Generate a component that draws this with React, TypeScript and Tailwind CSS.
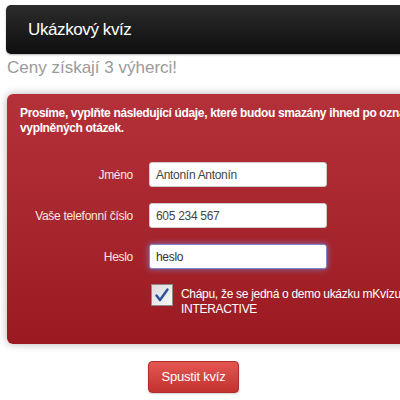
import React from 'react';

const rows = [
  { label: 'Jméno', value: 'Antonín Antonín', focus: false },
  { label: 'Vaše telefonní číslo', value: '605 234 567', focus: false },
  { label: 'Heslo', value: 'heslo', focus: true },
];

const App: React.FC = () => {
  return (
    <div className="w-[400px] h-[400px] overflow-hidden bg-white pl-[6px] pt-[5px] font-['Liberation_Sans',Arial,sans-serif]">
      <div className="w-[420px] h-[49px] rounded-l-[5px] bg-gradient-to-b from-[#2c2c2c] to-[#0f0f0f] flex items-center pl-[22px] shadow-[0_1px_2px_rgba(0,0,0,0.3)]">
        <h1 className="text-white text-[17px] tracking-[-0.4px] leading-none">Ukázkový kvíz</h1>
      </div>
      <p className="text-[#9a9a9a] text-[17px] leading-[20px] mt-[4px] pl-[1px]">Ceny získají 3 výherci!</p>

      <div className="ml-[1px] mt-[16px] w-[480px] h-[250px] rounded-[6px] bg-gradient-to-b from-[#b5313a] to-[#9b1a21] shadow-[0_0_8px_rgba(0,0,0,0.3)] pt-[12px] pl-[13px]">
        <p className="text-white text-[12px] tracking-[-0.35px] font-bold leading-[15px] w-[420px]">
          Prosíme, vyplňte následující údaje, které budou smazány ihned po označení vyplněných otázek.
        </p>

        <div className="mt-[26px] flex flex-col gap-[16px]">
          {rows.map((r) => (
            <div key={r.label} className="flex items-center">
              <label className="w-[113px] text-right text-[12px] tracking-[-0.3px] text-[#f6e6e6]">{r.label}</label>
              <div
                className={
                  r.focus
                    ? 'ml-[16px] w-[178px] h-[25px] rounded-[3px] bg-white border border-[#7d88c6] shadow-[0_0_6px_rgba(120,140,230,0.8)] flex items-center pl-[6px] text-[12px] tracking-[-0.3px] text-[#333]'
                    : 'ml-[16px] w-[178px] h-[25px] rounded-[3px] bg-white border border-[#ccc] flex items-center pl-[6px] text-[12px] tracking-[-0.3px] text-[#444]'
                }
              >
                {r.value}
              </div>
            </div>
          ))}
        </div>

        <div className="mt-[15px] ml-[131px] flex items-start">
          <div className="w-[22px] h-[22px] shrink-0 border border-[#8c8c8c] bg-gradient-to-br from-[#dcdcdc] to-[#f7f7f7] flex items-center justify-center">
            <svg width="16" height="16" viewBox="0 0 16 16">
              <path d="M2.5 8.5 L6 13 L13.5 2.5" fill="none" stroke="#2d4fa0" strokeWidth="2.4" strokeLinecap="round" strokeLinejoin="round" />
            </svg>
          </div>
          <p className="ml-[8px] text-white text-[12px] tracking-[-0.3px] leading-[15px] pt-[3px] whitespace-nowrap">
            Chápu, že se jedná o demo ukázku mKvízu
            <br />
            INTERACTIVE
          </p>
        </div>
      </div>

      <div className="mt-[17px] ml-[142px]">
        <button className="w-[91px] h-[32px] rounded-[4px] bg-gradient-to-b from-[#e35651] to-[#c2322e] border border-[#b52b27] text-white text-[13px] tracking-[-0.2px] shadow-[0_1px_2px_rgba(0,0,0,0.2)]">
          Spustit kvíz
        </button>
      </div>
    </div>
  );
};

export default App;
